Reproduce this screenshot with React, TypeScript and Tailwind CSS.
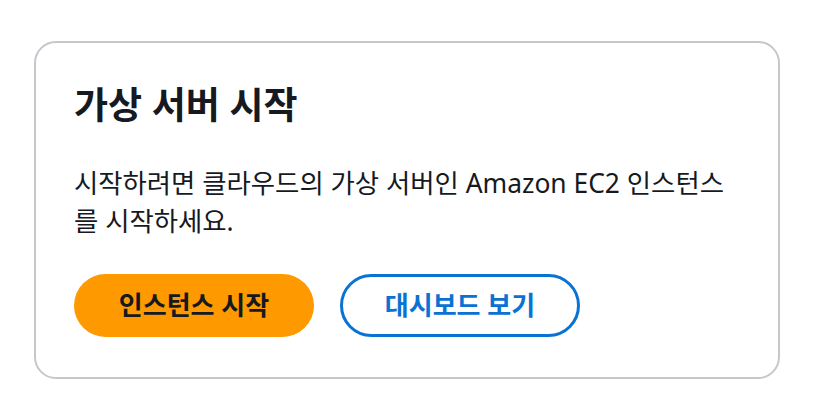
import React from 'react';

export default function App() {
  return (
    <div className="min-h-screen bg-white pt-[41px] pl-[34px]" style={{ fontFamily: '"Noto Sans", "Noto Sans CJK KR", sans-serif' }}>
      <section className="w-[746px] h-[338px] border-2 border-[#c6c6cd] rounded-[22px] bg-white px-[38px] pt-[38px]">
        <h2 className="text-[37px] font-bold leading-[48px] text-[#16191f]">가상 서버 시작</h2>
        <p className="mt-[35px] w-[660px] text-[26.4px] leading-[38px] text-[#16191f]">
          시작하려면 클라우드의 가상 서버인 Amazon EC2 인스턴스를 시작하세요.
        </p>
        <div className="mt-[34px] flex gap-[26px]">
          <button className="w-[240px] h-[63px] rounded-full bg-[#ff9900] text-[26px] font-bold text-[#16191f] flex items-center justify-center">
            인스턴스 시작
          </button>
          <button className="w-[240px] h-[63px] rounded-full border-[3px] border-[#0972d3] bg-white text-[26px] font-bold text-[#0972d3] flex items-center justify-center">
            대시보드 보기
          </button>
        </div>
      </section>
    </div>
  );
}
